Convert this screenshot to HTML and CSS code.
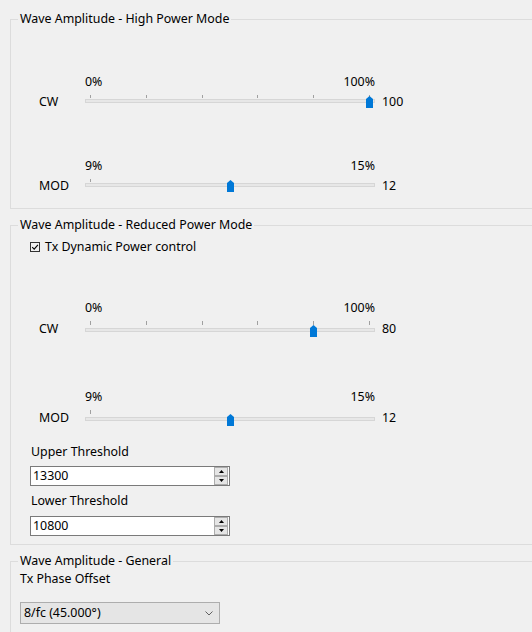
FILE: index.html
```html
<html lang="en">
<head>
    <meta name="viewport" content="width=device-width, initial-scale=1.0">
    <title>Wave Amplitude</title>
    <link rel="stylesheet" href="styles.css">
</head>
<body>
    <fieldset class="group group-high">
        <legend>Wave Amplitude - High Power Mode</legend>
        <div class="slider-row row-cw">
            <span class="slider-name">CW</span>
            <div class="slider">
                <div class="slider-scale"><span>0%</span><span>100%</span></div>
                <div class="slider-ticks"><i></i><i></i><i></i><i></i><i></i><i></i></div>
                <div class="slider-track"><span class="slider-thumb" style="left:280px"></span></div>
            </div>
            <span class="slider-value">100</span>
        </div>
        <div class="slider-row row-mod">
            <span class="slider-name">MOD</span>
            <div class="slider">
                <div class="slider-scale"><span>9%</span><span>15%</span></div>
                <div class="slider-ticks"><i></i></div>
                <div class="slider-track"><span class="slider-thumb" style="left:141px"></span></div>
            </div>
            <span class="slider-value">12</span>
        </div>
    </fieldset>

    <fieldset class="group group-reduced">
        <legend>Wave Amplitude - Reduced Power Mode</legend>
        <div class="check-row">
            <svg class="check-box" width="10" height="10" viewBox="0 0 10 10">
                <rect x="0.5" y="0.5" width="9" height="9" fill="none" stroke="#333" stroke-width="1"/>
                <path d="M2.2 5.2 L4.2 7.2 L7.9 2.8" fill="none" stroke="#000" stroke-width="1.1"/>
            </svg>
            <span>Tx Dynamic Power control</span>
        </div>
        <div class="slider-row slider-loose row-cw2">
            <span class="slider-name">CW</span>
            <div class="slider">
                <div class="slider-scale"><span>0%</span><span>100%</span></div>
                <div class="slider-ticks"><i></i><i></i><i></i><i></i><i></i><i></i></div>
                <div class="slider-track"><span class="slider-thumb" style="left:224px"></span></div>
            </div>
            <span class="slider-value">80</span>
        </div>
        <div class="slider-row slider-loose row-mod2">
            <span class="slider-name">MOD</span>
            <div class="slider">
                <div class="slider-scale"><span>9%</span><span>15%</span></div>
                <div class="slider-ticks"><i></i></div>
                <div class="slider-track"><span class="slider-thumb" style="left:141px"></span></div>
            </div>
            <span class="slider-value">12</span>
        </div>
        <div class="field-label upper-label">Upper Threshold</div>
        <div class="spin">
            <span class="spin-text">13300</span>
            <span class="spin-buttons">
                <span class="spin-btn"><svg width="5" height="3" viewBox="0 0 5 3"><path d="M0 3 L2.5 0 L5 3 Z" fill="#000"/></svg></span>
                <span class="spin-btn"><svg width="5" height="3" viewBox="0 0 5 3"><path d="M0 0 L2.5 3 L5 0 Z" fill="#000"/></svg></span>
            </span>
        </div>
        <div class="field-label lower-label">Lower Threshold</div>
        <div class="spin spin-last">
            <span class="spin-text">10800</span>
            <span class="spin-buttons">
                <span class="spin-btn"><svg width="5" height="3" viewBox="0 0 5 3"><path d="M0 3 L2.5 0 L5 3 Z" fill="#000"/></svg></span>
                <span class="spin-btn"><svg width="5" height="3" viewBox="0 0 5 3"><path d="M0 0 L2.5 3 L5 0 Z" fill="#000"/></svg></span>
            </span>
        </div>
    </fieldset>

    <fieldset class="group group-general">
        <legend>Wave Amplitude - General</legend>
        <div class="phase-label">Tx Phase Offset</div>
        <div class="combo">
            <span>8/fc (45.000°)</span>
            <svg class="combo-arrow" width="8" height="5" viewBox="0 0 8 5"><path d="M0.5 0.5 L4 4 L7.5 0.5" fill="none" stroke="#606060" stroke-width="1"/></svg>
        </div>
    </fieldset>
</body>
</html>
```

FILE: styles.css
```css
body {
    font-family: "Noto Sans", "Open Sans", sans-serif;
    font-size: 12.4px;
    line-height: 16px;
    color: #000;
    background-color: #f0f0f0;
    margin: 0;
    overflow: hidden;
}
.group {
    margin: 8px -20px 0 10px;
    padding: 0;
    border: 1px solid #dcdcdc;
    min-width: 0;
}
.group legend {
    margin-left: 7px;
    padding: 0 2px;
    line-height: 16px;
}
.group-high {
    margin-top: 11px;
    padding-bottom: 14px;
}
.group-reduced {
    padding-bottom: 8px;
}
.group-general {
    padding-bottom: 12px;
}

/* slider rows */
.slider-row {
    display: flex;
    align-items: flex-end;
    padding-left: 28px;
}
.slider-name {
    width: 46px;
}
.slider-value {
    margin-left: 7px;
}
.slider {
    width: 290px;
    padding-bottom: 7px;
}
.slider-scale {
    display: flex;
    justify-content: space-between;
    height: 16px;
}
.slider-ticks {
    display: flex;
    justify-content: space-between;
    padding: 0 5px;
    height: 3px;
    margin-top: 5px;
}
.slider-ticks i {
    width: 1px;
    height: 100%;
    background-color: #a0a0a0;
}
.slider-track {
    position: relative;
    height: 2px;
    margin-top: 1px;
    border: 1px solid #d6d6d6;
    background-color: #e7e7e7;
}
.slider-thumb {
    position: absolute;
    top: -4px;
    width: 7px;
    height: 12px;
    background-color: #0078d7;
    clip-path: polygon(50% 0, 100% 3px, 100% 100%, 0 100%, 0 3px);
}
.slider-loose .slider-ticks {
    height: 4px;
}
.slider-loose .slider-track {
    margin-top: 3px;
}
.slider-loose .slider-name,
.slider-loose .slider-value {
    margin-bottom: 2px;
}
.row-cw { margin-top: 47px; }
.row-mod { margin-top: 48px; }
.row-cw2 { margin-top: 45px; }
.row-mod2 { margin-top: 50px; }

/* checkbox */
.check-row {
    display: flex;
    align-items: center;
    margin-top: 6px;
    padding-left: 19px;
}
.check-box {
    margin-right: 5px;
}

/* numeric inputs */
.field-label {
    padding-left: 20px;
}
.upper-label { margin-top: 16px; }
.lower-label { margin-top: 7px; }
.spin {
    display: flex;
    justify-content: space-between;
    align-items: center;
    width: 198px;
    height: 18px;
    margin: 6px 0 0 19px;
    border: 1px solid #7a7a7a;
    background-color: #fff;
}
.spin-last {
    margin-top: 7px;
}
.spin-text {
    padding-left: 2px;
}
.spin-buttons {
    display: flex;
    flex-direction: column;
    margin-right: 1px;
}
.spin-btn {
    display: flex;
    align-items: center;
    justify-content: center;
    width: 12px;
    height: 7px;
    border: 1px solid #acacac;
    background-color: #e5e5e5;
}

/* combo box */
.phase-label {
    margin-top: 2px;
    padding-left: 9px;
}
.combo {
    display: flex;
    justify-content: space-between;
    align-items: center;
    width: 189px;
    height: 20px;
    margin: 15px 0 0 9px;
    padding: 0 6px 0 3px;
    border: 1px solid #adadad;
    background-color: #e5e5e5;
}
```
